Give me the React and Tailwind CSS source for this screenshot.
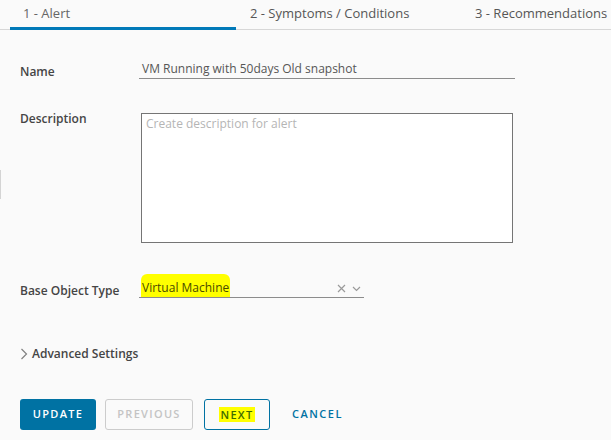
import React from "react";

export default function App() {
  const font = { fontFamily: '"Open Sans", "Liberation Sans", sans-serif' };
  return (
    <div className="relative w-[611px] h-[440px] bg-[#fafafa] overflow-hidden text-[#565656]" style={font}>
      {/* left edge mark */}
      <div className="absolute left-0 top-[170px] w-[1px] h-[29px] bg-[#d4d4d4]" />

      {/* tabs */}
      <div className="flex pl-[10px] h-[30px] border-b border-[#d7d7d7]">
        <div className="shrink-0 w-[226px] pl-[13px] pt-[4px] text-[13px] text-[#666] border-b-[3px] border-[#0079b8] -mb-[1px]">1 - Alert</div>
        <div className="shrink-0 w-[226px] pl-[14px] pt-[4px] text-[13px] text-[#565656]">2 - Symptoms / Conditions</div>
        <div className="shrink-0 w-[149px] pl-[13px] pt-[4px] text-[13px] text-[#565656] whitespace-nowrap">3 - Recommendations</div>
      </div>

      <div className="pl-[20px]">
        {/* Name */}
        <div className="flex items-start mt-[30px]">
          <div className="w-[119px] text-[12px] font-semibold text-[#454545] pt-[3px]">Name</div>
          <div className="w-[376px] border-b border-[#8c8c8c] h-[19px] pl-[3px] text-[12px] text-[#565656] leading-[17px]">
            VM Running with 50days Old snapshot
          </div>
        </div>

        {/* Description */}
        <div className="flex items-start mt-[32px]">
          <div className="w-[121px] text-[12px] font-semibold text-[#454545] -mt-[3px]">Description</div>
          <div className="w-[372px] h-[130px] bg-white border border-[#757575] pl-[4px] pt-[1px] text-[12px] text-[#b5b5b5]">
            Create description for alert
          </div>
        </div>

        {/* Base Object Type */}
        <div className="flex items-start mt-[31px]">
          <div className="w-[119px] text-[12px] font-semibold text-[#454545] pt-[8px]">Base Object Type</div>
          <div className="w-[225px] h-[24px] border-b border-[#8c8c8c] flex items-end relative">
            <span className="ml-[2px] bg-[#ffff00] rounded-t-[6px] px-[1px] pt-[5px] pb-[1px] text-[12px] leading-[17px] text-[#4a4a00]">Virtual Machine</span>
            <div className="ml-auto flex items-center gap-[6px] pb-[4px] pr-[3px]">
              <svg width="9" height="9" viewBox="0 0 9 9">
                <path d="M1 1 L8 8 M8 1 L1 8" stroke="#9a9a9a" strokeWidth="1.2" />
              </svg>
              <svg width="9" height="6" viewBox="0 0 9 6">
                <path d="M1 1 L4.5 4.5 L8 1" stroke="#9a9a9a" strokeWidth="1.2" fill="none" />
              </svg>
            </div>
          </div>
        </div>

        {/* Advanced settings */}
        <div className="flex items-center mt-[45px] gap-[4px]">
          <svg width="8" height="12" viewBox="0 0 8 12">
            <path d="M1.5 1 L6.5 6 L1.5 11" stroke="#808080" strokeWidth="1.2" fill="none" />
          </svg>
          <span className="text-[12px] font-semibold text-[#454545]">Advanced Settings</span>
        </div>

        {/* Buttons */}
        <div className="flex items-center mt-[36px]">
          <button className="w-[76px] h-[31px] rounded-[3px] bg-[#0072a3] text-white text-[11px] font-semibold tracking-[1.3px]">UPDATE</button>
          <button className="ml-[9px] w-[88px] h-[31px] rounded-[3px] border border-[#cccccc] text-[#c4c4c4] text-[11px] font-semibold tracking-[1.3px]">PREVIOUS</button>
          <button className="ml-[11px] w-[66px] h-[31px] rounded-[3px] border border-[#0072a3] flex items-center justify-center">
            <span className="bg-[#ffff00] px-[1px] h-[15px] leading-[15px] text-[11px] font-semibold tracking-[1.3px] text-[#3d6b00]">NEXT</span>
          </button>
          <button className="ml-[22px] text-[#0072a3] text-[11px] font-semibold tracking-[1.5px]">CANCEL</button>
        </div>
      </div>
    </div>
  );
}
